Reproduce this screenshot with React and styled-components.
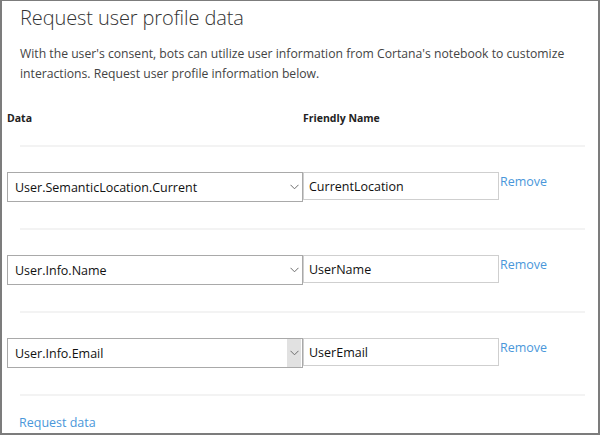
import React from 'react';
import styled, { createGlobalStyle } from 'styled-components';

const GlobalStyle = createGlobalStyle`
  html, body {
    margin: 0;
    padding: 0;
    background: #ffffff;
  }
  * {
    box-sizing: border-box;
  }
`;

const rows = [
  { field: 'User.SemanticLocation.Current', name: 'CurrentLocation' },
  { field: 'User.Info.Name', name: 'UserName' },
  { field: 'User.Info.Email', name: 'UserEmail', hover: true },
];

function Chevron() {
  return (
    <svg width="9" height="6" viewBox="0 0 9 6">
      <path d="M0.5 0.8 L4.5 4.8 L8.5 0.8" fill="none" stroke="#6d6d6d" strokeWidth="1" />
    </svg>
  );
}

function App() {
  return (
    <Frame>
      <GlobalStyle />
      <Title>Request user profile data</Title>
      <Intro>
        With the user's consent, bots can utilize user information from Cortana's notebook to customize
        interactions. Request user profile information below.
      </Intro>
      <HeaderRow>
        <HeaderCell>Data</HeaderCell>
        <HeaderCell>Friendly Name</HeaderCell>
      </HeaderRow>
      <Divider />
      {rows.map((row) => (
        <React.Fragment key={row.field}>
          <Row>
            <Select>
              <SelectText>{row.field}</SelectText>
              <Arrow hover={row.hover}>
                <Chevron />
              </Arrow>
            </Select>
            <NameInput value={row.name} readOnly />
            <RemoveLink href="#">Remove</RemoveLink>
          </Row>
          <Divider />
        </React.Fragment>
      ))}
      <Footer>
        <Link href="#">Request data</Link>
      </Footer>
    </Frame>
  );
}

export default App;

const Frame = styled.div`
width: 600px;
height: 435px;
border: 2px solid #7c7c7c;
border-top-width: 1px;
background: #fff;
font-family: "Segoe UI", "Open Sans", sans-serif;
color: #333;
overflow: hidden;
display: flex;
flex-direction: column;
`

const Title = styled.h1`
margin: 3px 0 0 18px;
font-size: 20px;
font-weight: 300;
line-height: 28px;
color: #333;
letter-spacing: -0.1px;
`

const Intro = styled.p`
margin: 12px 0 0 18px;
width: 560px;
font-size: 12.2px;
line-height: 20px;
color: #444;
`

const HeaderRow = styled.div`
display: grid;
grid-template-columns: 296px 200px;
margin: 27px 0 20px 5px;
`

const HeaderCell = styled.div`
font-size: 10.5px;
font-weight: 700;
color: #222;
line-height: 14px;
`

const Divider = styled.div`
height: 2px;
background: #f3f3f3;
margin: 0 13px 0 18px;
`

const Row = styled.div`
display: flex;
align-items: flex-start;
margin-left: 5px;
padding: 25px 0 26px;
`

const Select = styled.div`
width: 296px;
height: 30px;
border: 1px solid #a9a9a9;
display: flex;
align-items: center;
padding: 0 1px 0 7px;
background: #fff;
`

const SelectText = styled.span`
flex: 1;
font-size: 12.5px;
color: #111;
`

const Arrow = styled.span`
width: 14px;
height: 28px;
display: flex;
align-items: center;
justify-content: center;
background: ${props => props.hover ? '#e1e1e1' : 'transparent'};
`

const NameInput = styled.input`
width: 196px;
height: 28px;
border: 1px solid #cfcfcf;
padding: 0 5px;
font-family: inherit;
font-size: 12.5px;
color: #111;
outline: none;
`

const Link = styled.a`
font-size: 12.5px;
color: #4a97da;
text-decoration: none;
margin-left: 1px;
line-height: 16px;
`

const RemoveLink = styled(Link)`
margin-top: 2px;
`

const Footer = styled.div`
padding: 17px 0 0 16px;
line-height: 16px;
`
